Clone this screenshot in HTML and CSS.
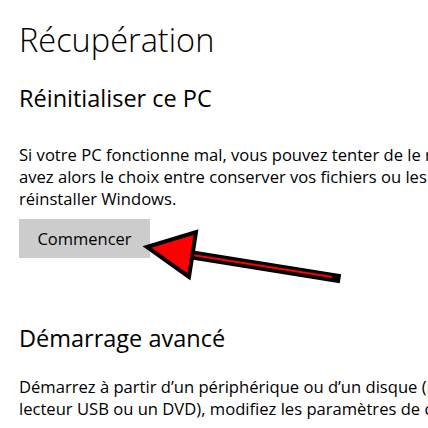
FILE: index.html
```html
<!DOCTYPE html>
<html lang="fr">
<head>
  <meta charset="UTF-8">
  <title>Récupération</title>
  <link rel="stylesheet" href="styles.css">
</head>
<body>
  <div class="page">
    <h1 class="page-title">Récupération</h1>

    <section class="block">
      <h2 class="block-title">Réinitialiser ce PC</h2>
      <p class="block-text">
        <span>Si votre PC fonctionne mal, vous pouvez tenter de le réinitialiser. Vous</span>
        <span>avez alors le choix entre conserver vos fichiers ou les supprimer, puis de</span>
        <span>réinstaller Windows.</span>
      </p>
      <button class="action-btn">Commencer</button>
    </section>

    <section class="block block-advanced">
      <h2 class="block-title">Démarrage avancé</h2>
      <p class="block-text">
        <span>Démarrez à partir d’un périphérique ou d’un disque (par exemple, un</span>
        <span>lecteur USB ou un DVD), modifiez les paramètres de démarrage de Windows</span>
      </p>
    </section>

    <!-- flèche rouge d'annotation -->
    <svg class="annotation" width="428" height="428" viewBox="0 0 428 428">
      <line x1="186" y1="254" x2="336" y2="278" stroke="#000" stroke-width="9" stroke-linecap="square"/>
      <line x1="186" y1="254" x2="332" y2="277" stroke="#f00" stroke-width="2"/>
      <polygon points="147,247 196,232 189,277" fill="#f00" stroke="#000" stroke-width="4" stroke-linejoin="miter"/>
    </svg>
  </div>
</body>
</html>
```

FILE: styles.css
```css
* {
  box-sizing: border-box;
}

body {
  margin: 0;
  background: #fff;
  color: #000;
  font-family: 'Open Sans', 'Noto Sans', sans-serif;
  overflow: hidden;
}

.page {
  position: relative;
  width: 428px;
  height: 428px;
  padding: 20px 0 0 19px;
  overflow: hidden;
}

.page-title {
  margin: 0;
  font-size: 32.5px;
  font-weight: 300;
  line-height: 40px;
}

.block-title {
  margin: 23px 0 0;
  font-size: 23.5px;
  font-weight: 400;
  line-height: 30px;
}

.block-text {
  margin: 31px 0 0;
  font-size: 16.6px;
  line-height: 22px;
  white-space: nowrap;
}

.block-text span {
  display: block;
}

.action-btn {
  display: block;
  margin-top: 9px;
  width: 131px;
  height: 39px;
  border: none;
  background: #cccccc;
  color: #000;
  font-family: inherit;
  font-size: 16.5px;
  padding: 0;
}

.block-advanced .block-title {
  margin-top: 65px;
}

.block-advanced .block-text {
  margin-top: 23px;
}

.annotation {
  position: absolute;
  top: 0;
  left: 0;
  pointer-events: none;
}
```
